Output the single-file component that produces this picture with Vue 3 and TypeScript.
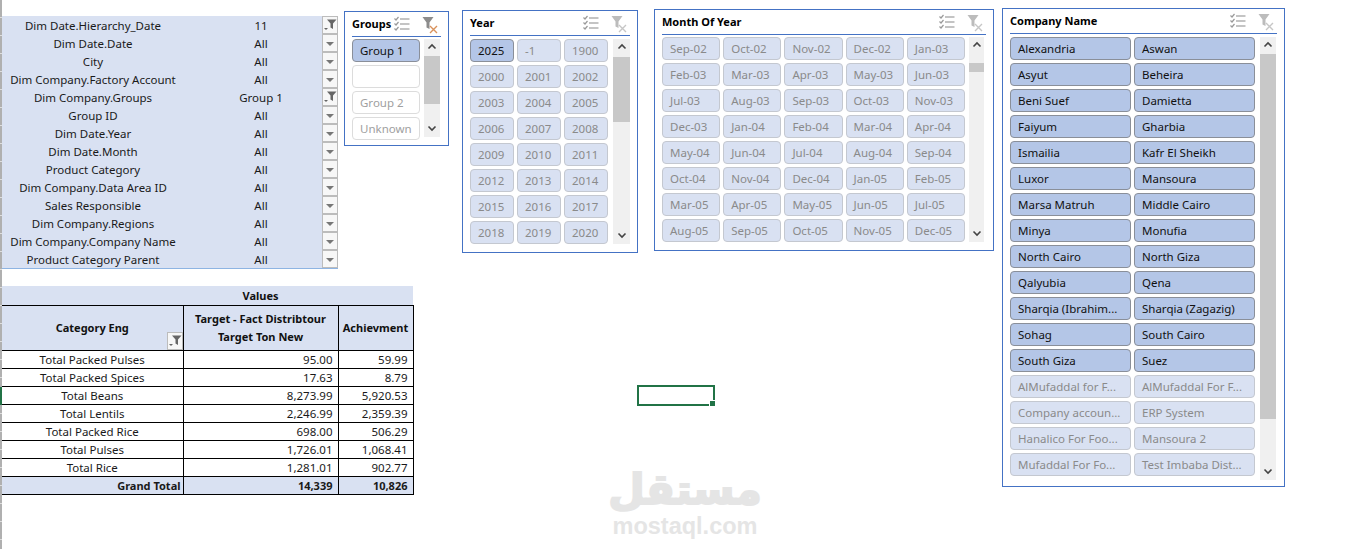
<script setup lang="ts">
interface FilterRow {
  label: string
  value: string
  filtered?: boolean
}

interface SliceItem {
  text: string
  state: 'on' | 'off' | 'blank'
}

interface Slicer {
  id: string
  title: string
  columns: number
  cleared: boolean
  items: SliceItem[]
}

const filters: FilterRow[] = [
  { label: 'Dim Date.Hierarchy_Date', value: '11', filtered: true },
  { label: 'Dim Date.Date', value: 'All' },
  { label: 'City', value: 'All' },
  { label: 'Dim Company.Factory Account', value: 'All' },
  { label: 'Dim Company.Groups', value: 'Group 1', filtered: true },
  { label: 'Group ID', value: 'All' },
  { label: 'Dim Date.Year', value: 'All' },
  { label: 'Dim Date.Month', value: 'All' },
  { label: 'Product Category', value: 'All' },
  { label: 'Dim Company.Data Area ID', value: 'All' },
  { label: 'Sales Responsible', value: 'All' },
  { label: 'Dim Company.Regions', value: 'All' },
  { label: 'Dim Company.Company Name', value: 'All' },
  { label: 'Product Category Parent', value: 'All' },
]

const rows = [
  ['Total Packed Pulses', '95.00', '59.99'],
  ['Total Packed Spices', '17.63', '8.79'],
  ['Total Beans', '8,273.99', '5,920.53'],
  ['Total Lentils', '2,246.99', '2,359.39'],
  ['Total Packed Rice', '698.00', '506.29'],
  ['Total Pulses', '1,726.01', '1,068.41'],
  ['Total Rice', '1,281.01', '902.77'],
]

const off = (list: string[]): SliceItem[] => list.map((text) => ({ text, state: 'off' }))
const on = (list: string[]): SliceItem[] => list.map((text) => ({ text, state: 'on' }))

const slicers: Slicer[] = [
  {
    id: 'groups',
    title: 'Groups',
    columns: 1,
    cleared: true,
    items: [
      { text: 'Group 1', state: 'on' },
      { text: '', state: 'blank' },
      { text: 'Group 2', state: 'blank' },
      { text: 'Unknown', state: 'blank' },
    ],
  },
  {
    id: 'year',
    title: 'Year',
    columns: 3,
    cleared: false,
    items: [
      { text: '2025', state: 'on' },
      ...off(['-1', '1900', '2000', '2001', '2002', '2003', '2004', '2005', '2006', '2007', '2008',
        '2009', '2010', '2011', '2012', '2013', '2014', '2015', '2016', '2017', '2018', '2019', '2020']),
    ],
  },
  {
    id: 'month',
    title: 'Month Of Year',
    columns: 5,
    cleared: false,
    items: off(['Sep-02', 'Oct-02', 'Nov-02', 'Dec-02', 'Jan-03', 'Feb-03', 'Mar-03', 'Apr-03', 'May-03', 'Jun-03',
      'Jul-03', 'Aug-03', 'Sep-03', 'Oct-03', 'Nov-03', 'Dec-03', 'Jan-04', 'Feb-04', 'Mar-04', 'Apr-04',
      'May-04', 'Jun-04', 'Jul-04', 'Aug-04', 'Sep-04', 'Oct-04', 'Nov-04', 'Dec-04', 'Jan-05', 'Feb-05',
      'Mar-05', 'Apr-05', 'May-05', 'Jun-05', 'Jul-05', 'Aug-05', 'Sep-05', 'Oct-05', 'Nov-05', 'Dec-05']),
  },
  {
    id: 'company',
    title: 'Company Name',
    columns: 2,
    cleared: false,
    items: [
      ...on(['Alexandria', 'Aswan', 'Asyut', 'Beheira', 'Beni Suef', 'Damietta', 'Faiyum', 'Gharbia', 'Ismailia',
        'Kafr El Sheikh', 'Luxor', 'Mansoura', 'Marsa Matruh', 'Middle Cairo', 'Minya', 'Monufia', 'North Cairo',
        'North Giza', 'Qalyubia', 'Qena', 'Sharqia (Ibrahim...', 'Sharqia (Zagazig)', 'Sohag', 'South Cairo',
        'South Giza', 'Suez']),
      ...off(['AlMufaddal for F...', 'AlMufaddal For F...', 'Company accoun...', 'ERP System',
        'Hanalico For Foo...', 'Mansoura 2', 'Mufaddal For Fo...', 'Test Imbaba Dist...']),
    ],
  },
]
</script>

<template>
  <div class="sheet">
    <div class="ruler"><i /></div>

    <div class="report">
      <div class="filters">
        <div v-for="f in filters" :key="f.label" class="filter-row">
          <span class="filter-label">{{ f.label }}</span>
          <span class="filter-value">{{ f.value }}</span>
          <span class="drop">
            <svg v-if="f.filtered" width="14" height="14" viewBox="0 0 14 14">
              <path d="M4 1.5h9.5L10 5.5V11L7.5 9.5v-4z" fill="#666" />
              <path d="M1 10h4l-2 2z" fill="#666" />
            </svg>
            <svg v-else width="14" height="14" viewBox="0 0 14 14">
              <path d="M3 6h8l-4 4z" fill="#777" />
            </svg>
          </span>
        </div>
      </div>

      <table class="pivot">
        <colgroup>
          <col class="col-a" />
          <col class="col-b" />
          <col class="col-c" />
        </colgroup>
        <thead>
          <tr class="values-row">
            <th class="plain" />
            <th class="plain">Values</th>
            <th class="plain" />
          </tr>
          <tr class="head-row">
            <th class="cat">
              Category Eng
              <span class="drop head-drop">
                <svg width="14" height="14" viewBox="0 0 14 14">
                  <path d="M4 1.5h9.5L10 5.5V11L7.5 9.5v-4z" fill="#666" />
                  <path d="M1 10h4l-2 2z" fill="#666" />
                </svg>
              </span>
            </th>
            <th>Target - Fact Distribtour<br />Target Ton New</th>
            <th>Achievment</th>
          </tr>
        </thead>
        <tbody>
          <tr v-for="r in rows" :key="r[0]">
            <td class="name">{{ r[0] }}</td>
            <td>{{ r[1] }}</td>
            <td>{{ r[2] }}</td>
          </tr>
          <tr class="total">
            <td>Grand Total</td>
            <td>14,339</td>
            <td>10,826</td>
          </tr>
        </tbody>
      </table>
    </div>

    <section v-for="s in slicers" :key="s.id" class="slicer" :class="s.id">
      <header class="slicer-head">
        <span class="slicer-title">{{ s.title }}</span>
        <svg class="multi" width="16" height="16" viewBox="0 0 16 16">
          <g fill="none" stroke="#9a9a9a" stroke-width="1.2">
            <path d="M0.5 2.5l1.5 1.5L4.5 1M0.5 7.5l1.5 1.5L4.5 6M0.5 12.5l1.5 1.5L4.5 11" />
            <path d="M6 3h9.5M6 8h9.5M6 13h9.5" stroke="#8a8a8a" />
          </g>
        </svg>
        <svg class="clear" width="16" height="18" viewBox="0 0 16 18">
          <path d="M0.5 1h11L7.5 6.5V13L4.5 11.5v-5z" :fill="s.cleared ? '#8c8c8c' : '#bcbcbc'" />
          <path d="M8 10l7 7M15 10l-7 7" fill="none" :stroke="s.cleared ? '#d9925c' : '#c6c6c6'" stroke-width="1.4" />
        </svg>
      </header>
      <div class="slicer-body">
        <div class="items" :style="{ gridTemplateColumns: `repeat(${s.columns}, 1fr)` }">
          <div v-for="(item, i) in s.items" :key="i" class="item" :class="item.state">{{ item.text }}</div>
        </div>
        <div class="scroll">
          <svg class="arrow" width="10" height="8" viewBox="0 0 10 8">
            <path d="M1.5 5.5L5 2l3.5 3.5" fill="none" stroke="#444" stroke-width="1.6" />
          </svg>
          <div class="track"><div class="thumb" /></div>
          <svg class="arrow" width="10" height="8" viewBox="0 0 10 8">
            <path d="M1.5 2.5L5 6l3.5-3.5" fill="none" stroke="#444" stroke-width="1.6" />
          </svg>
        </div>
      </div>
    </section>

    <div class="cell-cursor"><i /></div>

    <div class="mark">
      <div class="mark-ar" dir="rtl">مستقل</div>
      <div class="mark-en">mostaql.com</div>
    </div>
  </div>
</template>

<style>
html,
body {
  margin: 0;
  background: #fff;
}
</style>

<style scoped>
.sheet {
  position: relative;
  width: 1370px;
  height: 549px;
  overflow: hidden;
  background: #fff;
  font-family: "Noto Sans", "DejaVu Sans", sans-serif;
  font-size: 11.5px;
  color: #1a1a1a;
}

.ruler {
  position: absolute;
  left: 0;
  top: 0;
  bottom: 0;
  width: 2px;
  background: repeating-linear-gradient(to bottom, #b0b0b0 0, #b0b0b0 17px, #dedede 17px, #dedede 18px);
}

.ruler i {
  position: absolute;
  left: 0;
  top: 387px;
  width: 2px;
  height: 18px;
  background: #217346;
}

.report {
  display: flex;
  flex-direction: column;
  width: 414px;
  padding: 16px 0 0 2px;
  box-sizing: border-box;
}

.filters {
  width: 336px;
  background: #d9e1f2;
  border-bottom: 1px solid #8eb4e3;
}

.filter-row {
  display: grid;
  grid-template-columns: 182px 154px;
  height: 18px;
  line-height: 20px;
  position: relative;
  text-align: center;
  white-space: nowrap;
}

.drop {
  position: absolute;
  right: 0;
  top: 0;
  width: 16px;
  height: 18px;
  box-sizing: border-box;
  border: 1px solid #bcbcbc;
  background: #f7f7f7;
  display: flex;
  align-items: center;
  justify-content: center;
}

.pivot {
  margin-top: 17px;
  width: 411px;
  border-collapse: collapse;
  table-layout: fixed;
  font-size: 11.5px;
}

.col-a { width: 181px; }
.col-b { width: 155px; }
.col-c { width: 75px; }

.pivot th,
.pivot td {
  padding: 0;
  height: 17px;
  line-height: 17px;
  white-space: nowrap;
  box-sizing: border-box;
}

.pivot th {
  background: #d9e1f2;
  font-weight: 700;
  font-size: 11px;
  color: #111;
  text-align: center;
  border: 1px solid #000;
}

.pivot th.plain {
  border: 0;
  border-bottom: 1px solid #000;
  height: 18px;
  line-height: 19px;
}

.head-row th {
  height: 45px;
  line-height: 18px;
  padding-top: 0;
  position: relative;
}

.pivot td {
  height: 18px;
  border: 1px solid #000;
  text-align: right;
  padding-right: 5px;
}

.pivot tr > :first-child {
  border-left: 0;
}

.pivot td.name {
  text-align: center;
  padding-right: 0;
}

.total td {
  background: #d9e1f2;
  font-weight: 700;
  font-size: 11px;
  line-height: 16px;
  padding-top: 1px;
  padding-right: 2px;
}

.total td + td {
  padding-right: 5px;
}

.head-drop {
  right: 0;
  top: auto;
  bottom: 0;
  height: 18px;
}

.slicer {
  position: absolute;
  box-sizing: border-box;
  border: 1px solid #4472c4;
  background: #fff;
  padding: 0 7px;
  overflow: hidden;
}

.groups { left: 344px; top: 11px; width: 105px; height: 135px; }
.year { left: 462px; top: 10px; width: 176px; height: 243px; }
.month { left: 654px; top: 9px; width: 340px; height: 242px; }
.company { left: 1002px; top: 8px; width: 283px; height: 479px; }

.slicer-head {
  display: flex;
  align-items: center;
  height: 22px;
  padding-bottom: 2px;
  border-bottom: 1px solid #4472c4;
  font-weight: 700;
  font-size: 11px;
  color: #000;
}

.slicer-title {
  flex: 1;
  white-space: nowrap;
}

.multi { margin: 2px 12px 0 0; }
.clear { margin: 4px 3px 0 0; }

.slicer-body {
  display: flex;
  align-items: flex-start;
  gap: 5px;
  padding-top: 3px;
}

.items {
  flex: 1;
  display: grid;
  align-content: start;
  gap: 3px;
  min-width: 0;
}

.item {
  height: 23px;
  line-height: 21px;
  box-sizing: border-box;
  border-radius: 4px;
  padding-left: 7px;
  white-space: nowrap;
  overflow: hidden;
  border: 1px solid #c4c8d0;
  background: #d9e1f2;
  color: #8a8a8a;
}

.item.on {
  background: #b4c6e7;
  border-color: #8a8f99;
  color: #111;
}

.item.blank {
  background: #fff;
  border-color: #dcdcdc;
  color: #a0a0a0;
}

.scroll {
  flex: none;
  width: 16px;
  background: #f0f0f0;
  display: flex;
  flex-direction: column;
  align-items: center;
}

.arrow {
  flex: none;
  margin: 4px 0 5px;
}

.track {
  flex: 1;
  width: 100%;
}

.thumb {
  background: #c8c8c8;
  height: 100%;
}

.groups .slicer-body { padding-top: 2px; }
.groups .items { width: 68px; flex: none; }
.groups .scroll { height: 98px; margin-left: -1px; }
.groups .thumb { height: 48px; }

.year .scroll { width: 17px; height: 205px; }
.year .thumb { height: 65px; margin-top: 1px; }

.month .slicer-body { gap: 4px; padding-top: 2px; }
.month .scroll { width: 15px; height: 205px; margin-right: 2px; }
.month .thumb { height: 9px; margin-top: 9px; }

.company .scroll { height: 443px; margin-right: 1px; }
.company .thumb { height: 365px; }

.cell-cursor {
  position: absolute;
  left: 637px;
  top: 385px;
  width: 78px;
  height: 21px;
  box-sizing: border-box;
  border: 2px solid #217346;
}

.cell-cursor i {
  position: absolute;
  right: -3px;
  bottom: -3px;
  width: 5px;
  height: 5px;
  background: #217346;
  border: 1px solid #fff;
}

.mark {
  position: absolute;
  left: 600px;
  top: 462px;
  width: 170px;
  text-align: center;
  color: #e5e5e5;
  pointer-events: none;
}

.mark-ar {
  font-family: "DejaVu Sans", sans-serif;
  font-weight: 700;
  font-size: 42px;
  line-height: 50px;
  padding-top: 3px;
  -webkit-text-stroke: 2px #e5e5e5;
}

.mark-en {
  font-family: "Liberation Sans", sans-serif;
  font-weight: 700;
  font-size: 23.5px;
  line-height: 22px;
}
</style>
